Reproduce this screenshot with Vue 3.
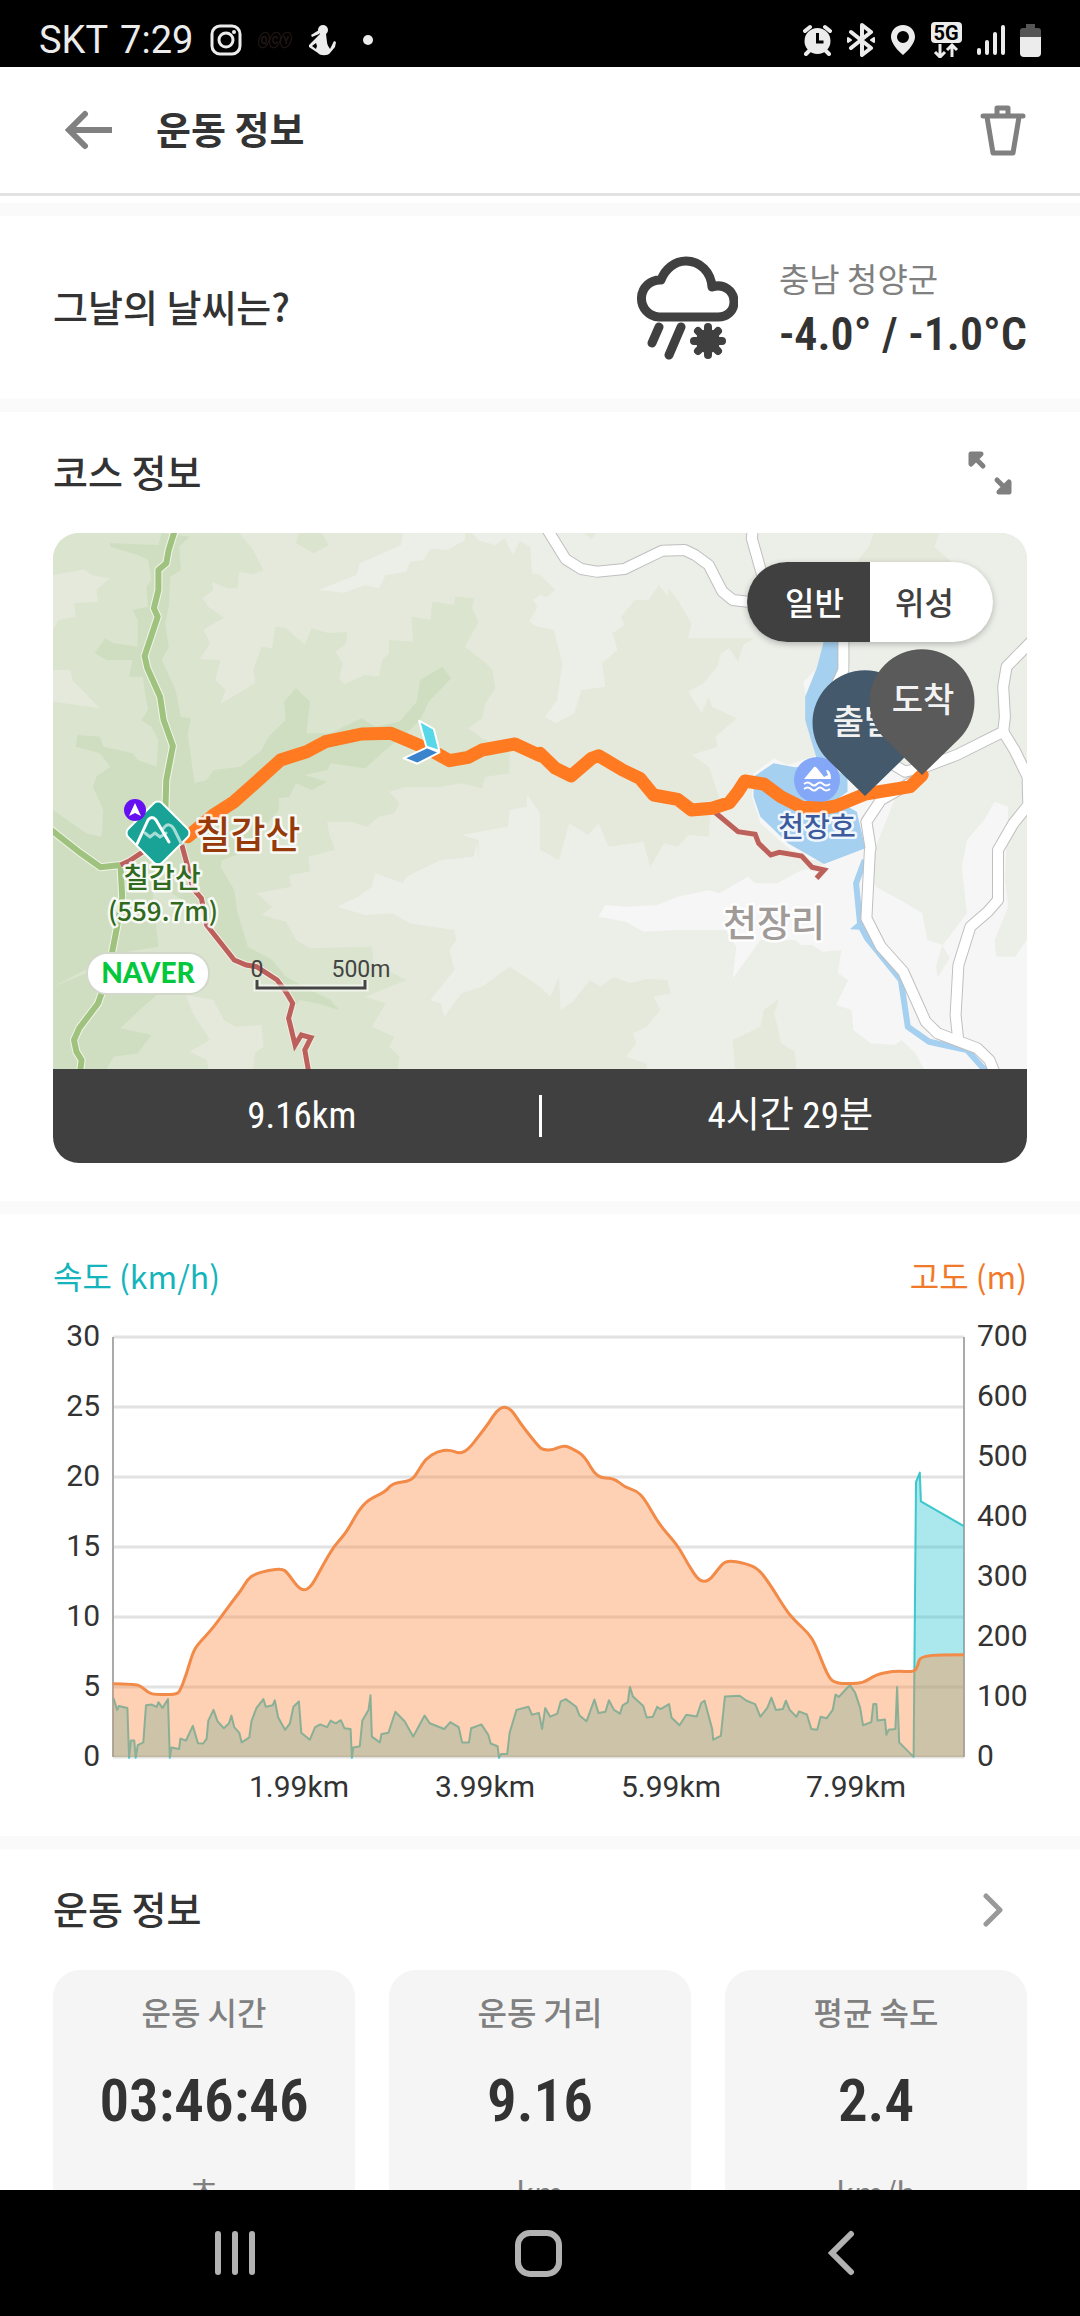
<script setup>
import { ref } from 'vue'

const mapMode = ref('normal')

const sheets = {
  A: [-53, -13, 2.904, 3],
  B: [487, -13, 2.904, 3],
  C: [-53, 247, 2.904, 3],
  D: [487, 247, 2.904, 3],
  E: [-53, -80, 2.904, 2.613],
  F: [487, -80, 2.904, 2.613]
}

function plot(source) {
  let sheet = sheets.A
  const out = []
  for (const token of source.trim().split(/\s+/)) {
    if (sheets[token]) {
      sheet = sheets[token]
      continue
    }
    const [x, y] = token.split(',').map(Number)
    out.push([Math.round((sheet[0] + x / sheet[2]) * 10) / 10, Math.round((sheet[1] + y / sheet[3]) * 10) / 10])
  }
  return out
}

const pts = (source) => plot(source).map((p) => p.join(',')).join(' ')

function curve(points) {
  let d = `M${points[0]}`
  for (let i = 1; i < points.length - 1; i++) {
    const [x, y] = points[i]
    const [nx, ny] = points[i + 1]
    d += ` Q${x},${y} ${(x + nx) / 2},${(y + ny) / 2}`
  }
  return d + ` L${points[points.length - 1]}`
}

const terrain = [
  { fill: '#ecefe8', at: 'A 1170,39 1165,75 1045,130 1035,165 925,210 1000,218 1060,195 1100,205 1120,165 1180,155 1190,125 1230,120 1250,85 1300,90 1350,60 1350,39' },
  { fill: '#ecefe8', at: 'A 1370,39 1390,62 1440,75 1465,55 1490,105 1510,62 1540,80 1545,160 1568,165 1568,225 1548,240 1560,260 1537,305 1568,325 1568,800 1530,830 1530,860 1480,870 1475,920 1340,945 1390,960 1390,1020 C 1385,190 1375,230 1280,240 1180,290 1170,310 1090,280 1080,320 1040,350 980,380 1060,405 1140,400 1190,430 1320,450 1325,480 1305,510 1320,570 1250,660 1280,670 1290,710 1340,640 1400,620 1480,560 1540,600 1568,620 D 30,650 55,590 60,690 95,665 145,600 175,620 215,590 260,610 310,597 370,600 380,640 330,650 350,690 310,740 270,760 280,790 250,830 310,850 310,867 1440,867 B 1440,39' },
  { fill: '#e5e9db', at: 'A 1560,325 1535,500 1535,830 D 0,100 0,210 55,240 85,130 140,165 170,130 200,200 300,185 320,260 360,190 400,200 430,165 490,170 495,100 B 520,830 490,740 440,705 515,680 510,650 570,595 500,560 490,530 470,580 430,515 475,490 515,440 525,400 550,385 575,425 590,375 622,355 500,355 430,355 440,310 400,240 372,205 372,230 345,195 315,240 275,240 235,290 245,315 210,340 225,390 180,430 190,500 120,510 100,580 45,610 15,590 50,540 65,430 40,330 0,320' },
  { fill: '#e5e9db', at: 'D 565,867 560,780 640,740 650,690 695,655 680,700 690,740 700,790 740,815 745,867' },
  { fill: '#e5e9db', at: 'B 970,39 1160,39 1145,80 1200,130 920,125 955,80' },
  { fill: '#e5e9db', at: 'B 0,165 45,210 20,232 0,225' },
  { fill: '#e5e9db', at: 'B 128,39 163,39 150,60' },
  { fill: '#dae4ce', at: 'A 0,39 695,39 735,90 765,150 735,163 695,155 690,205 660,205 615,185 620,210 588,235 605,260 650,293 590,330 610,370 580,418 640,420 625,480 655,510 640,552 700,515 742,488 735,450 760,380 790,385 800,320 830,325 885,375 905,325 955,340 1008,335 1005,370 975,395 995,430 985,475 1000,492 1060,465 1100,470 1110,420 1130,400 1130,360 1200,365 1195,290 1250,300 1255,245 1320,255 1320,230 1378,235 1370,265 1390,305 1350,380 1400,420 1430,450 1438,505 1410,550 1400,595 1360,625 1400,655 1480,690 1480,760 1410,770 1400,805 1340,790 1280,800 1225,800 1180,800 1130,815 1160,850 1145,880 1100,890 1065,920 1020,905 950,905 955,940 970,980 975,1020 C 970,210 895,230 900,275 840,285 845,320 745,340 790,380 760,405 830,425 860,480 900,505 1080,500 1085,550 1180,600 1060,650 1120,670 1080,740 1145,770 1130,800 1160,830 1155,867 0,867' },
  { fill: '#dae4ce', at: 'A 868,39 935,39 955,75 910,100 860,70' },
  { fill: '#e5e9db', at: 'A 154,165 245,148 265,165 318,175 280,210 285,245 215,250 220,290 170,300 154,330' },
  { fill: '#e5e9db', at: 'A 154,450 205,450 210,480 290,565 154,545' },
  { fill: '#e5e9db', at: 'C 540,645 620,660 650,720 685,740 760,735 765,800 740,820 735,867 605,867 600,840 550,815 610,780 560,700' },
  { fill: '#cfdec0', at: 'A 470,39 550,50 520,80 525,150 495,170 490,260 480,310 490,380 470,420 510,510 525,590 555,595 545,640 565,790 600,780 620,750 700,740 760,690 780,650 830,600 825,545 860,505 900,545 890,640 960,640 1050,595 1090,620 1160,605 1210,545 1220,480 1285,440 1310,475 1245,545 1220,600 1180,640 1130,680 1060,745 960,730 950,750 885,765 950,785 905,810 860,790 840,830 810,835 810,870 700,1000 645,1020 C 640,260 680,330 690,400 720,500 790,540 830,590 920,640 960,660 985,690 920,670 870,660 850,690 820,640 760,570 690,550 560,380 440,300 460,500 340,520 154,620 154,200 A 154,870 250,940 295,950 300,870 270,800 280,770 320,740 290,700 220,680 225,645 290,650 300,680 385,700 400,720 455,740 460,660 440,620 410,600 430,570 420,510 415,470 375,470 385,420 310,420 275,400 305,355 330,370 400,380 400,300 385,270 430,260 425,200 440,180 430,120 400,105 320,80 320,70 460,75' },
  { fill: '#cfdec0', at: 'C 154,620 250,580 330,640 460,640 405,690 350,745 440,765 400,820 330,830 310,867 154,867' },
  { fill: '#f6f6f6', at: 'B 680,715 720,735 820,700 790,640 765,485 810,440 900,440 960,700 1060,760 960,1020 760,1020 640,910 615,830 620,760' },
  { fill: '#f6f6f6', at: 'D 170,410 190,375 250,380 340,375 400,350 490,330 520,340 605,290 625,310 690,310 750,275 820,255 860,230 940,210 975,320 1055,365 1110,400 1125,480 1170,495 1240,400 1225,260 1240,180 1290,120 1320,65 1360,80 1350,300 1360,380 1320,480 1325,530 1380,530 1440,440 1440,867 1115,867 1090,820 1050,780 1030,795 960,790 910,750 905,690 860,675 895,600 865,580 875,510 820,515 790,495 760,495 740,480 640,480 560,595 570,500 540,450 400,450 300,455 250,425' },
  { fill: '#ecefe8', at: 'D 1168,495 1190,535 1155,592 1150,560' }
]

const water = [
  'B 678,730 740,742 835,737 893,770 893,815 860,840 920,875 945,985 825,1032 720,970 640,890 620,830 620,770',
  'B 825,360 867,360 865,450 830,560 840,720 805,720 790,670 770,600 770,530 805,440'
]
const stream = 'D 943,240 918,310 930,435 950,475 1048,600 1068,740 1130,785 1240,810 1300,880'

const roads = [
  'B 22,30 75,118 120,147 165,155 245,147 355,92 420,90 450,105 490,135 530,215 560,240 640,250',
  'B 618,30 615,55 645,165',
  'B 881,350 881,450 850,520 900,640 1020,730 1060,755 1120,740 1210,705 1345,635 1350,590 1345,500 1355,440 1440,350',
  'B 1345,635 1378,690 1416,770 1418,855 D 1375,130 1330,210 1330,360 1300,395 1250,440 1215,555 1207,705 1215,785',
  'B 1100,775 990,840 948,905 960,985 D 958,210 948,415 990,500 1055,575 1120,725 1155,760 1270,805 1305,840 1325,890'
]

const greenTrails = [
  'A 508,30 490,90 483,130 460,150 460,210 447,265 458,290 420,408 428,445 465,530 475,600 502,678 483,780 480,880',
  'C 130,135 235,220 292,262 350,255 355,350 340,440 325,520 295,640 285,670 230,745 215,780 222,815 237,840 232,880'
]
const redTrails = [
  'C 350,255 375,243 430,205',
  'C 528,195 545,260 560,325 585,355 600,435 680,540 715,555 745,560 805,600 830,635 850,670 838,715 857,795 875,765 903,773 885,810 897,880',
  'D 500,90 575,155 625,163 635,190 670,225 695,217 760,228 790,262 825,270 803,295'
]
const route = 'A 545,950 620,885 680,845 740,790 815,720 890,695 945,665 1050,642 1135,640 1200,668 1250,690 1305,722 1360,712 1400,690 1495,672 1568,707 B 0,700 45,745 90,768 150,715 170,707 240,750 290,775 330,825 400,838 440,870 500,865 550,848 575,815 595,783 650,792 700,830 760,862 820,865 860,858 945,822 1075,800 1110,765'

/* Chart series */
const altitude = plot('E 328,1212 390,1213 410,1218 430,1235 450,1240 510,1240 522,1232 540,1190 560,1130 575,1108 610,1075 640,1040 680,990 700,968 720,938 740,925 780,915 820,911 835,922 865,960 883,968 900,960 915,940 940,898 970,852 1005,818 1040,760 1070,730 1120,710 1140,687 1195,682 1215,655 1235,625 1270,604 1305,600 1335,611 1360,600 1390,565 1420,530 1440,500 1462,487 1485,495 1510,530 1540,565 1568,595 F 10,600 35,602 70,588 100,600 130,618 165,674 215,674 245,698 280,707 305,730 345,795 400,850 430,900 462,944 490,944 515,915 540,888 600,898 635,912 670,955 715,1020 740,1047 780,1080 800,1110 835,1190 855,1210 900,1212 940,1209 975,1188 1030,1178 1087,1181 1097,1165 1105,1137 1231,1136')
const speed = plot('E 330,1250 340,1280 345,1270 370,1275 375,1405 380,1360 390,1360 394,1405 400,1372 416,1365 424,1268 440,1266 455,1272 460,1260 472,1275 488,1252 493,1405 498,1378 520,1382 524,1355 540,1360 560,1322 575,1367 590,1368 600,1355 605,1308 620,1280 632,1310 650,1328 665,1315 672,1295 680,1325 695,1340 702,1365 724,1352 730,1310 745,1275 765,1252 772,1272 792,1268 798,1255 808,1300 828,1332 842,1315 852,1272 868,1258 875,1340 900,1358 915,1325 930,1318 950,1325 960,1308 975,1315 990,1307 1000,1328 1018,1330 1022,1405 1026,1378 1045,1375 1052,1308 1070,1280 1076,1242 1080,1350 1103,1365 1108,1343 1128,1340 1148,1285 1175,1310 1200,1350 1233,1295 1248,1315 1290,1330 1308,1312 1332,1325 1342,1365 1362,1365 1368,1328 1398,1318 1418,1345 1425,1368 1445,1375 1449,1405 1455,1395 1473,1395 1480,1340 1500,1280 1535,1272 1545,1293 1565,1288 F 6,1330 15,1275 30,1298 50,1290 60,1258 75,1252 105,1272 115,1295 135,1310 158,1253 170,1288 190,1285 200,1255 215,1280 232,1290 240,1268 255,1260 261,1220 270,1245 300,1270 310,1300 328,1298 340,1272 350,1278 375,1265 382,1300 405,1320 425,1293 455,1297 468,1262 478,1256 500,1330 503,1358 525,1348 537,1245 580,1243 600,1256 625,1265 640,1298 660,1275 672,1248 685,1280 705,1278 714,1256 725,1280 745,1298 752,1284 775,1292 788,1330 805,1332 815,1298 832,1302 850,1280 858,1240 868,1246 900,1215 915,1235 930,1275 938,1320 962,1312 968,1265 977,1265 980,1308 1002,1305 1006,1345 1012,1332 1032,1330 1037,1220 1043,1365 1085,1403 1092,685 1103,660 1106,735 1231,800')

const altitudeLine = curve(altitude)
const altitudeArea = `${altitudeLine} L911,457 L60,457 Z`
const speedLine = speed.map((p) => p.join(',')).join(' ')
const speedArea = `60,457 ${speedLine} 911,457`

const speedTicks = [30, 25, 20, 15, 10, 5, 0].map((value, i) => ({ value, y: 37 + i * 70 }))
const altitudeTicks = [700, 600, 500, 400, 300, 200, 100, 0].map((value, i) => ({ value, y: 37 + i * 60 }))
const distanceTicks = [
  { label: '1.99km', x: 246 },
  { label: '3.99km', x: 432 },
  { label: '5.99km', x: 618 },
  { label: '7.99km', x: 803 }
]

const stats = [
  { label: '운동 시간', value: '03:46:46', unit: '초' },
  { label: '운동 거리', value: '9.16', unit: 'km' },
  { label: '평균 속도', value: '2.4', unit: 'km/h' }
]
</script>

<template>
  <div class="screen">
    <div class="status">
      <div class="status-left">
        <div class="carrier"><span>SKT</span><span>7:29</span></div>
        <svg width="32" height="32" viewBox="0 0 32 32" fill="none" stroke="#ececec" stroke-width="3">
          <rect x="2" y="2" width="28" height="28" rx="8" />
          <circle cx="16" cy="16" r="7" />
          <circle cx="24" cy="8" r="2" fill="#ececec" stroke="none" />
        </svg>
        <svg width="36" height="20" viewBox="0 0 36 20" fill="none" stroke="#231815">
          <ellipse cx="7" cy="10" rx="5" ry="8" transform="rotate(20 7 10)" />
          <ellipse cx="18" cy="10" rx="5" ry="8" transform="rotate(20 18 10)" />
          <ellipse cx="29" cy="10" rx="5" ry="8" transform="rotate(20 29 10)" />
          <g class="qcy"><text x="7" y="14">Q</text><text x="18" y="14">C</text><text x="29" y="14">Y</text></g>
        </svg>
        <svg width="28" height="32" viewBox="0 0 28 32" fill="#ececec">
          <circle cx="15" cy="6" r="5" />
          <path d="M11 6 3 11l1 2 7-3zM12 10h6l1 8c0 3 2 5 3 7l3-6 1-2 2 1-1 5-5 6c-2 3-10 3-12 0L1 23v-2l9-9zM8 19l-4 3 4 3 1-3z" fill-rule="evenodd" />
        </svg>
        <i class="dot"></i>
      </div>
      <div class="status-right">
        <svg width="29" height="32" viewBox="0 0 29 32" fill="#ececec">
          <path d="M2 7 7 3M27 7l-5-4M6 27l-3 3M23 27l3 3" stroke="#ececec" stroke-width="4" stroke-linecap="round" />
          <circle cx="14.500" cy="17" r="13" />
          <path d="M14.500 9v9h6" fill="none" stroke="#000" stroke-width="3" />
        </svg>
        <svg width="28" height="34" viewBox="0 0 28 34" fill="none" stroke="#ececec" stroke-width="4" stroke-linejoin="round" stroke-linecap="round">
          <path d="M4 9l20 16-9 7V2l9 7L4 25" />
          <path d="M1 15l3 2-3 2zM27 15l-3 2 3 2z" stroke-width="2" fill="#ececec" />
        </svg>
        <svg width="26" height="32" viewBox="0 0 26 32" fill="#ececec" fill-rule="evenodd">
          <path d="M13 1C6 1 1 6 1 13c0 6 7 14 12 18 5-4 12-12 12-18C25 6 20 1 13 1zm0 6a6 6 0 1 1 0 12 6 6 0 0 1 0-12z" />
        </svg>
        <svg width="31" height="36" viewBox="3 0 31 36" fill="none">
          <rect x="3" y="0" width="31" height="21" rx="4" fill="#ececec" />
          <text class="five-g" x="18" y="18">5G</text>
          <path d="M12 22v12M7 30l5 5 5-5M24 35V23M19 28l5-5 5 5" stroke="#ececec" stroke-width="3" />
        </svg>
        <svg width="28" height="32" viewBox="0 0 28 32" stroke="#ececec" stroke-width="4" stroke-linecap="round">
          <path d="M2 26v3M10 18v11M18 10v19M26 3v26" />
        </svg>
        <svg width="21" height="34" viewBox="0 0 21 34">
          <path d="M6 1h9v4h3q3 0 3 3v7H0V8q0-3 3-3h3z" fill="#555" />
          <path d="M0 14h21v16q0 4-4 4H4q-4 0-4-4z" fill="#ececec" />
        </svg>
      </div>
    </div>

    <header class="header">
      <button class="icon-button" type="button" aria-label="뒤로">
        <svg width="48" height="40" viewBox="0 0 48 40" fill="none" stroke="#808080" stroke-width="6">
          <path d="M4 20h43" />
          <path d="M20 4 4 20l16 16" stroke-linecap="round" />
        </svg>
      </button>
      <h1>운동 정보</h1>
      <button class="icon-button trash" type="button" aria-label="삭제">
        <svg width="46" height="52" viewBox="0 0 46 52" fill="none" stroke="#808080" stroke-width="5" stroke-linejoin="round" stroke-linecap="round">
          <path d="M3 12h40M17 11V4h11v7M7 13l6 36h20l6-36" />
        </svg>
      </button>
    </header>

    <main class="content">
      <section class="weather">
        <h2>그날의 날씨는?</h2>
        <svg width="102" height="104" viewBox="0 0 102 104" fill="none" stroke="#404040" stroke-width="9" stroke-linecap="round">
          <path d="M23 61a18.500 18.500 0 0 1 2-37C29 13 39 5 50 5c14 0 25 11 26 26 12-4 22 4 22 15 0 9-7 15-16 15z" stroke-linejoin="round" />
          <path d="M23 71l-7 16M45 71 33 99" />
          <g fill="#404040" stroke-width="8"><circle cx="72" cy="85" r="12" stroke="none" /><path d="M72 71v28M58 85h28M62 75l20 20M82 75 62 95" /></g>
        </svg>
        <div class="reading">
          <span class="place">충남 청양군</span>
          <strong>-4.0° / -1.0°C</strong>
        </div>
      </section>

      <section>
        <div class="section-head">
          <h2>코스 정보</h2>
          <button class="icon-button expand" type="button" aria-label="지도 확대">
            <svg width="44" height="44" viewBox="0 0 44 44" fill="#808080" stroke="#808080" stroke-width="5" stroke-linejoin="round" stroke-linecap="round">
              <path d="M3 13V3h10zM6 6l9 9M41 31v10H31zM38 38l-9-9" />
            </svg>
          </button>
        </div>
        <div class="course">
          <svg class="map" viewBox="0 0 974 536" role="img" aria-label="코스 지도">
            <rect width="974" height="536" fill="#e5e9db" />
            <polygon v-for="(t, i) in terrain" :key="'t' + i" :points="pts(t.at)" :fill="t.fill" />
            <polygon v-for="(w, i) in water" :key="'w' + i" :points="pts(w)" fill="#a5d0f0" />
            <g fill="none" stroke-linejoin="round">
              <polyline :points="pts(stream)" stroke="#a5d0f0" stroke-width="6" />
              <polygon :points="pts('D 900,448 925,425 945,450')" fill="#a5d0f0" />
              <polyline v-for="(r, i) in roads" :key="'c' + i" :points="pts(r)" stroke="#bfbfbf" stroke-width="12" />
              <polyline v-for="(r, i) in roads" :key="'r' + i" :points="pts(r)" stroke="#fff" stroke-width="10" />
              <polyline v-for="(r, i) in greenTrails" :key="'gc' + i" :points="pts(r)" stroke="#f1f5ea" stroke-width="8" />
              <polyline v-for="(r, i) in greenTrails" :key="'g' + i" :points="pts(r)" stroke="#a0c27f" stroke-width="6" />
              <polyline v-for="(r, i) in redTrails" :key="'dc' + i" :points="pts(r)" stroke="#f3ece4" stroke-width="7" />
              <polyline v-for="(r, i) in redTrails" :key="'d' + i" :points="pts(r)" stroke="#bb605a" stroke-width="5" stroke-linejoin="miter" />
            </g>
            <circle cx="764" cy="247" r="23" fill="#85a7f7" />
            <path d="M751 246l10-12q1-1 3 1l7 9 4-2-2-5q5 0 5 9z" fill="#fff" />
            <path d="M751 251q4-3 7 0t6 0 6 0 7 0M751 256q4-3 7 0t6 0 6 0 7 0" fill="none" stroke="#fff" stroke-width="2" />
            <polyline :points="pts(route)" fill="none" stroke="#ff7a20" stroke-width="13" stroke-linejoin="round" stroke-linecap="round" />

            <g stroke="#fff" stroke-width="2" stroke-linejoin="round">
              <polygon :points="pts('A 1217,602 1260,627 1276,693 1238,680')" fill="#56d8e8" />
              <polygon :points="pts('A 1172,715 1240,682 1276,697 1212,731')" fill="#3b84cc" />
            </g>

            <g>
              <rect x="81" y="276" width="48" height="48" rx="6" transform="rotate(45 105 300)" fill="#18a396" stroke="#fff" stroke-width="2" />
              <g fill="none" stroke-linejoin="round" stroke-linecap="round" stroke-width="3">
                <path d="M92 300l5 4 5-4 5 4 6-4M110 296c4-6 8-5 11 0l7 14" stroke="#a5dcd5" />
                <path d="M84 311l11-24q4-5 8 0l13 22" stroke="#fff" />
              </g>
              <circle cx="82" cy="277" r="11" fill="#6610f2" />
              <path d="M82 270l6 13-6-3-6 3z" fill="#fff" />
            </g>

            <g class="map-label">
              <text class="peak-name" x="195" y="315">칠갑산</text>
              <text class="peak" x="109" y="355">칠갑산</text>
              <text class="height" x="110" y="388">(559.7m)</text>
              <text class="lake" x="764" y="304">천장호</text>
              <text class="village" x="721" y="404">천장리</text>
            </g>

            <rect x="34" y="420" width="122" height="41" rx="20" fill="#fff" stroke="#d2d8ca" stroke-width="2" />
            <text class="naver" x="95" y="450">NAVER</text>
            <g class="scale">
              <path d="M204 447v8h108v-8" fill="none" stroke="#fff" stroke-opacity=".6" stroke-width="7" />
              <path d="M204 447v8h108v-8" fill="none" stroke="#444" stroke-width="3" />
              <text x="204" y="444">0</text>
              <text x="308" y="444">500m</text>
            </g>

            <g class="pin">
              <path transform="translate(812 189)" d="M0 74-37 38A52.500 52.500 0 1 1 37 38z" fill="#44596b" />
              <text x="811" y="201">출발</text>
              <path transform="translate(869 168)" d="M0 74-37 38A52.500 52.500 0 1 1 37 38z" fill="#5a5a5a" />
              <text x="870" y="179">도착</text>
            </g>
          </svg>
          <div class="toggle">
            <button type="button" :class="{ on: mapMode === 'normal' }" @click="mapMode = 'normal'">일반</button>
            <button type="button" :class="{ on: mapMode === 'satellite' }" @click="mapMode = 'satellite'">위성</button>
          </div>
          <div class="summary">
            <span>9.16km</span>
            <i></i>
            <span>4시간 29분</span>
          </div>
        </div>
      </section>

      <section class="chart">
        <div class="legend">
          <span class="speed">속도 (km/h)</span>
          <span class="altitude">고도 (m)</span>
        </div>
        <svg class="plot" viewBox="0 0 974 510" role="img" aria-label="속도와 고도 그래프">
          <path v-for="t in speedTicks" :key="t.value" :d="`M60 ${t.y}H911`" stroke="#e2e2e2" stroke-width="3" />
          <path d="M60 37V457M911 37V457" stroke="#aaa" stroke-width="2" />
          <polygon :points="speedArea" fill="#2ac6d2" fill-opacity=".4" />
          <polyline :points="speedLine" fill="none" stroke="#2cc2c8" stroke-opacity=".9" stroke-width="2" stroke-linejoin="round" />
          <path :d="altitudeArea" fill="#ff8c44" fill-opacity=".4" />
          <path :d="altitudeLine" fill="none" stroke="#f28a48" stroke-width="3" />
          <g class="tick">
            <text v-for="t in speedTicks" :key="'s' + t.value" class="end" x="47" :y="t.y + 9">{{ t.value }}</text>
            <text v-for="t in altitudeTicks" :key="'a' + t.value" x="924" :y="t.y + 9">{{ t.value }}</text>
            <text v-for="t in distanceTicks" :key="t.label" class="middle" :x="t.x" y="497">{{ t.label }}</text>
          </g>
        </svg>
      </section>

      <section>
        <div class="section-head">
          <h2>운동 정보</h2>
          <button class="icon-button more" type="button" aria-label="더보기">
            <svg width="20" height="34" viewBox="0 0 20 34" fill="none" stroke="#999" stroke-width="5" stroke-linecap="round" stroke-linejoin="round">
              <path d="M3 3l14 14L3 31" />
            </svg>
          </button>
        </div>
        <div class="cards">
          <article v-for="s in stats" :key="s.label" class="card">
            <span class="label">{{ s.label }}</span>
            <strong>{{ s.value }}</strong>
            <span class="unit">{{ s.unit }}</span>
          </article>
        </div>
      </section>
    </main>

    <nav class="navbar">
      <button type="button" aria-label="최근 앱">
        <svg width="44" height="44" viewBox="0 0 44 44" stroke="#b2b2b2" stroke-width="6" stroke-linecap="round"><path d="M5 3v38M22 3v38M39 3v38" /></svg>
      </button>
      <button type="button" aria-label="홈">
        <svg width="48" height="48" viewBox="0 0 48 48" fill="none" stroke="#b2b2b2" stroke-width="6"><rect x="4" y="4" width="41" height="41" rx="12" /></svg>
      </button>
      <button type="button" aria-label="뒤로">
        <svg width="28" height="46" viewBox="0 0 28 46" fill="none" stroke="#b2b2b2" stroke-width="6" stroke-linecap="round"><path d="M24 4 5 23l19 19" /></svg>
      </button>
    </nav>
  </div>
</template>

<style>
body {
  margin: 0;
  background: #fff;
}
</style>

<style scoped>
.screen {
  display: flex;
  flex-direction: column;
  height: 100vh;
  overflow: hidden;
  background: #fff;
  color: #333;
  font-family: "Noto Sans CJK KR", "Noto Sans", sans-serif;
}
button {
  border: 0;
  padding: 0;
  background: none;
  color: inherit;
  font-family: inherit;
}
svg {
  display: block;
  flex: none;
}
h1,
h2 {
  margin: 0;
  padding-bottom: 4px;
  font-size: 38px;
  line-height: 56px;
  font-weight: 500;
}
h1 {
  font-weight: 700;
}
.status {
  flex: none;
  height: 67px;
  box-sizing: border-box;
  padding: 14px 39px 0;
  display: flex;
  justify-content: space-between;
  background: #000;
  color: #ececec;
  font: 38px/52px Roboto, sans-serif;
}
.status-left,
.status-right {
  height: 52px;
  display: flex;
  align-items: center;
  gap: 15px;
}
.carrier {
  display: flex;
  gap: 12px;
  margin-right: 2px;
}
.qcy {
  fill: #231815;
  stroke: none;
  font: 700 10px Roboto, sans-serif;
  text-anchor: middle;
}
.five-g {
  fill: #000;
  font: 700 20px Roboto, sans-serif;
  text-anchor: middle;
}
.dot {
  width: 10px;
  height: 10px;
  margin-left: 12px;
  border-radius: 50%;
  background: #ececec;
}
.header {
  flex: none;
  height: 126px;
  padding: 0 54px 0 65px;
  display: flex;
  align-items: center;
  border-bottom: 3px solid #e2e2e2;
}
.header h1 {
  margin-left: 43px;
}
.trash {
  margin-left: auto;
}
.content {
  flex: 1;
  min-height: 0;
  overflow: hidden;
  padding-top: 7px;
}
section {
  border-top: 13px solid #fafafa;
  padding: 0 53px;
}
.weather {
  height: 183px;
  display: flex;
  align-items: center;
}
.weather h2 {
  flex: 1;
}
.reading {
  margin-left: 41px;
  display: flex;
  flex-direction: column;
}
.place {
  color: #808080;
  font-size: 33px;
  line-height: 44px;
  padding-bottom: 8px;
}
.reading strong {
  font: 600 46px/52px "Roboto Condensed", "Liberation Sans Narrow", "Noto Sans CJK KR", sans-serif;
}
.section-head {
  height: 121px;
  display: flex;
  align-items: center;
  justify-content: space-between;
}
.expand {
  margin-right: 15px;
}
.more {
  margin-right: 24px;
}
.course {
  position: relative;
  margin-bottom: 38px;
  border-radius: 26px;
  overflow: hidden;
}
.map,
.plot {
  width: 100%;
}
.toggle {
  position: absolute;
  top: 29px;
  right: 34px;
  display: flex;
  border-radius: 40px;
  overflow: hidden;
  background: #fff;
  box-shadow: 0 2px 6px rgba(0, 0, 0, 0.25);
}
.toggle button {
  width: 123px;
  height: 80px;
  padding: 0 14px 3px 0;
  font-size: 32px;
  font-weight: 500;
  color: #404040;
}
.toggle button:first-child {
  padding: 0 0 3px 12px;
}
.toggle .on {
  background: #404040;
  color: #fff;
}
.summary {
  height: 94px;
  display: flex;
  align-items: center;
  background: #404040;
  color: #fff;
  font: 37px/56px "Roboto Condensed", "Liberation Sans Narrow", "Noto Sans CJK KR", sans-serif;
}
.summary span {
  flex: 1;
  padding-left: 12px;
  text-align: center;
}
.summary i {
  width: 3px;
  height: 42px;
  background: #fff;
}
.map-label text {
  stroke: #fff;
  stroke-width: 5px;
  stroke-opacity: 0.85;
  stroke-linejoin: round;
  paint-order: stroke;
  text-anchor: middle;
  font-weight: 500;
  font-size: 28px;
}
.map-label .peak-name {
  fill: #963a0a;
  font-size: 38px;
}
.map-label .peak {
  fill: #2f6a1e;
}
.map-label .height {
  fill: #2f6a1e;
  font-size: 26px;
}
.map-label .lake {
  fill: #3d5a9c;
}
.map-label .village {
  fill: #a09a98;
  font-size: 37px;
}
.naver {
  fill: #03c73c;
  font: 900 28px Lato, sans-serif;
  text-anchor: middle;
}
.scale text {
  fill: #444;
  font: 23px Roboto, sans-serif;
  text-anchor: middle;
}
.pin text {
  fill: #f2f2f2;
  font-size: 34px;
  font-weight: 500;
  text-anchor: middle;
}
.chart {
  padding-bottom: 26px;
}
.legend {
  padding: 38px 0 2px;
  display: flex;
  justify-content: space-between;
  font-size: 32px;
  line-height: 46px;
}
.speed {
  color: #14b4bc;
}
.altitude {
  color: #f07a2a;
}
.tick {
  fill: #333;
  font: 30px Roboto, sans-serif;
}
.end {
  text-anchor: end;
}
.middle {
  text-anchor: middle;
}
.cards {
  display: grid;
  grid-template-columns: repeat(3, 1fr);
  gap: 34px;
}
.card {
  padding: 21px 0;
  display: flex;
  flex-direction: column;
  align-items: center;
  border-radius: 27px;
  background: #f5f5f5;
}
.label,
.unit {
  color: #808080;
  font-size: 32px;
  line-height: 40px;
}
.label {
  font-weight: 500;
}
.card strong {
  margin: 40px 0;
  font: 600 59px/60px "Roboto Condensed", "Liberation Sans Narrow", "Noto Sans CJK KR", sans-serif;
}
.navbar {
  flex: none;
  height: 126px;
  padding: 0 87px 0 83px;
  display: grid;
  grid-template-columns: repeat(3, 1fr);
  background: #000;
}
.navbar button {
  display: grid;
  place-items: center;
}
</style>
